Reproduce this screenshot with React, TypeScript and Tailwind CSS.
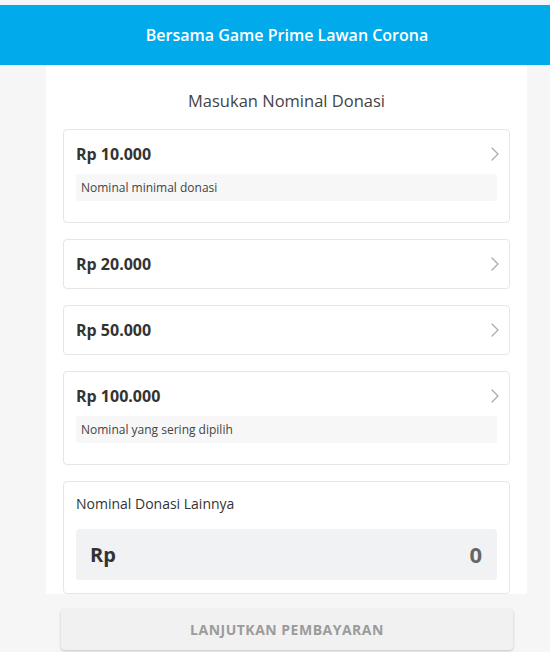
import React from 'react';

const OPTIONS = [
  { amount: 'Rp 10.000', note: 'Nominal minimal donasi' },
  { amount: 'Rp 20.000' },
  { amount: 'Rp 50.000' },
  { amount: 'Rp 100.000', note: 'Nominal yang sering dipilih' },
];

function Chevron() {
  return (
    <svg width="8" height="14" viewBox="0 0 8 14" fill="none" className="shrink-0 -mr-[2px]">
      <path d="M1 1l6 6-6 6" stroke="#a8a8a8" strokeWidth="1.2" strokeLinecap="round" strokeLinejoin="round" />
    </svg>
  );
}

function OptionCard({ amount, note }: { amount: string; note?: string }) {
  return (
    <div className={`border border-[#e6e6e6] rounded-[4px] px-[12px] pt-[13px] ${note ? 'pb-[21px]' : 'pb-[13px]'}`}>
      <div className="flex items-center justify-between h-[22px]">
        <span className="text-[16px] font-bold text-[#333]">{amount}</span>
        <Chevron />
      </div>
      {note && (
        <div className="mt-[9px] h-[27px] flex items-center px-[5px] bg-[#f7f7f7] rounded-[2px] text-[12px] text-[#444]">
          {note}
        </div>
      )}
    </div>
  );
}

export default function App() {
  return (
    <div
      className="w-[550px] h-[652px] overflow-hidden bg-[#f6f6f6] flex flex-col"
      style={{ fontFamily: '"Open Sans", "Noto Sans", sans-serif' }}
    >
      <div className="h-[5px] bg-[#f2f6f8]" />
      <header className="h-[60px] bg-[#01abeb] flex items-center justify-center pl-[24px] text-white text-[16px] font-semibold">
        Bersama Game Prime Lawan Corona
      </header>

      <main className="mx-[46px] w-[481px] bg-white px-[17px]">
        <h1 className="pt-[25px] pb-[17px] leading-[22px] text-center text-[16.5px] text-[#444]">
          Masukan Nominal Donasi
        </h1>
        <div className="flex flex-col gap-[16px]">
          {OPTIONS.map((o) => (
            <OptionCard key={o.amount} amount={o.amount} note={o.note} />
          ))}
          <div className="border border-[#e6e6e6] rounded-[4px] px-[12px] pt-[11px] pb-[13px]">
            <div className="leading-[22px] text-[14px] text-[#333]">Nominal Donasi Lainnya</div>
            <div className="mt-[14px] h-[51px] bg-[#f1f2f4] rounded-[4px] flex items-center justify-between pl-[14px] pr-[15px]">
              <span className="text-[20px] font-bold text-[#333]">Rp</span>
              <span className="text-[22px] font-bold text-[#666]">0</span>
            </div>
          </div>
        </div>
      </main>

      <div className="pt-[15px] pl-[61px]">
        <button className="w-[452px] h-[41px] rounded-[4px] bg-[#f1f1f1] shadow-[0_1px_3px_rgba(0,0,0,0.2)] text-[14px] font-bold text-[#9b9b9b] tracking-[0.5px]">
          LANJUTKAN PEMBAYARAN
        </button>
      </div>
    </div>
  );
}
